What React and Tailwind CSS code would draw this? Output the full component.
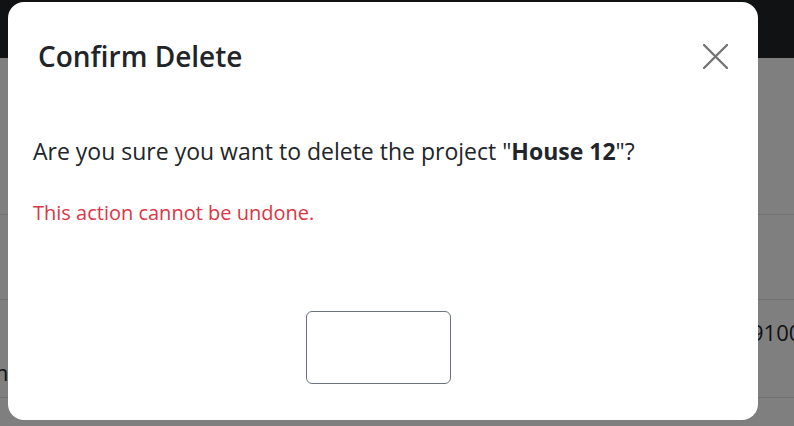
function BackgroundPage() {
  return (
    <div className="min-h-[426px] bg-white">
      <div className="h-[58px] bg-[#212529]" />
      <div className="pt-[156px]">
        <div className="border-t border-[#dee2e6] h-[85px]" />
        <div className="border-t border-[#dee2e6] h-[98px] relative text-[22px] text-[#212529] leading-[30px]">
          <div className="pl-[751px] pt-[17px] whitespace-nowrap">9100</div>
          <div className="pl-[0px] pt-[10px] -ml-[12px]">m</div>
        </div>
        <div className="border-t border-[#dee2e6] h-[40px]" />
      </div>
    </div>
  );
}

export default function App() {
  return (
    <div className="relative h-[426px] overflow-hidden font-['Open_Sans',sans-serif]">
      <BackgroundPage />
      <div className="absolute inset-0 bg-black/50" />
      <div className="absolute left-[8px] top-[2px] w-[750px] h-[418px] bg-white rounded-[16px] flex flex-col">
        <div className="flex items-center justify-between pl-[30px] pr-[30px] pt-[34px]">
          <h5 className="text-[28px] font-semibold text-[#212529] leading-[40px]">Confirm Delete</h5>
          <svg width="25" height="25" viewBox="0 0 25 25" className="text-[#757575]">
            <path d="M1 1L24 24M24 1L1 24" stroke="currentColor" strokeWidth="2.4" strokeLinecap="round" />
          </svg>
        </div>
        <div className="px-[25px] pt-[59px] text-[#212529]">
          <p className="text-[23px] leading-[32px]">
            Are you sure you want to delete the project "<strong className="font-bold">House 12</strong>"?
          </p>
          <p className="text-[20px] leading-[28px] text-[#dc3545] mt-[32px]">This action cannot be undone.</p>
        </div>
        <div className="flex justify-center mt-auto mb-[36px] pr-[10px]">
          <button className="w-[145px] h-[73px] border border-[#6c757d] rounded-[6px] bg-white" />
        </div>
      </div>
    </div>
  );
}
